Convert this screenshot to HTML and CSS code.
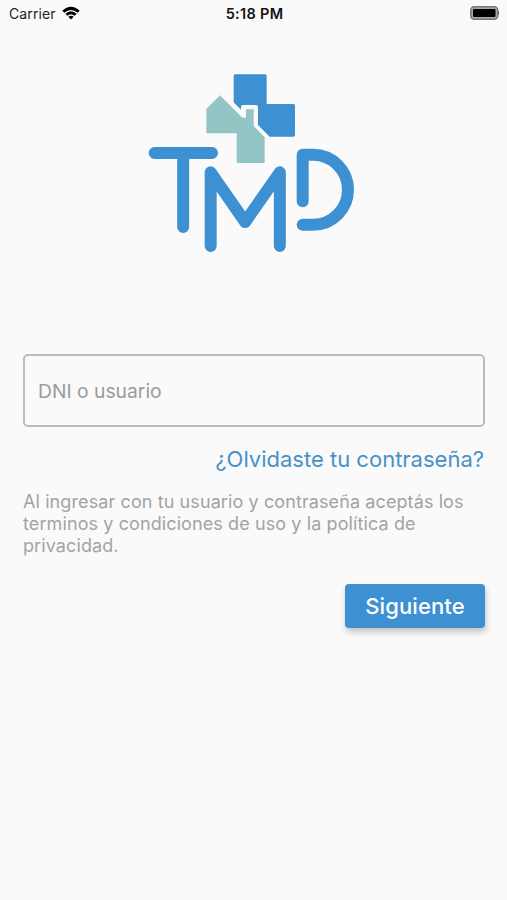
FILE: index.html
```html
<!DOCTYPE html>
<html lang="es">

<head>
    <meta charset="UTF-8">
    <meta name="viewport" content="width=device-width, initial-scale=1.0">
    <title>TMD - Ingresar</title>
    <link rel="stylesheet" href="styles.css">
</head>

<body>

    <header class="status-bar">
        <div class="carrier">
            <span class="carrier-name">Carrier</span>
            <svg class="wifi" viewBox="0 0 18 14" width="18" height="14">
                <path d="M0.300 4.700 Q9 -3 17.700 4.700 L15.700 6.800 Q9 1 2.300 6.800 Z" />
                <path d="M3.300 7.800 Q9 2.800 14.700 7.800 L12.700 9.800 Q9 6.600 5.300 9.800 Z" />
                <path d="M6.300 10.800 Q9 8.600 11.700 10.800 L9 13.600 Z" />
            </svg>
        </div>
        <span class="time">5:18 PM</span>
        <div class="power">
            <svg class="battery" viewBox="0 0 30 16" width="30" height="16">
                <rect class="battery-case" x="0.75" y="1.75" width="27" height="12.5" rx="3.5" />
                <rect x="3" y="4" width="22.5" height="8" rx="1" />
                <path d="M28.3 6 Q29.8 8 28.3 10 Z" />
            </svg>
        </div>
    </header>

    <main class="login">
        <svg class="logo" viewBox="0 0 675 585" width="225" height="195">
            <!-- Cross -->
            <path class="blue" d="M285 28 H375 Q380 28 380 33 V117 H460 Q465 117 465 122 V210 Q465 215 460 215 H389 L354 180 V126 Q354 120 348 120 H309 Q303 120 303 126 V134 L281 112 V33 Q281 28 285 28 Z" />
            <!-- House -->
            <path class="green" d="M240 91 L307 158 H318 V133 H341 V183 L374 217 V291 Q374 294 371 294 H293 Q290 294 290 291 V205 H202 Q199 205 199 202 V132 Z" />
            <!-- Letters -->
            <g class="letters">
                <path d="M44 264 H216 M129.5 264 V486" />
                <path d="M212 543 V322 L315.5 471 L419.5 322 V543" />
                <path d="M488 409 V269.5 H519 A105 105 0 0 1 519 479.5 H488" />
            </g>
        </svg>

        <form class="form">
            <label class="field">DNI o usuario</label>
            <a class="forgot">¿Olvidaste tu contraseña?</a>
            <p class="terms">Al ingresar con tu usuario y contraseña aceptás los<br>terminos y condiciones de uso y la política de<br>privacidad.</p>
            <button class="next" type="button">Siguiente</button>
        </form>
    </main>

</body>

</html>
```

FILE: styles.css
```css
* {
    margin: 0;
    padding: 0;
    box-sizing: border-box;
}

body {
    font-family: "Inter", sans-serif;
    background-color: #fafafa;
    min-height: 100vh;
}

/* Status bar */
.status-bar {
    display: flex;
    align-items: center;
    height: 26px;
    padding: 0 7px 0 9px;
    font-size: 14px;
    color: #222;
}

.carrier,
.power {
    flex: 1;
    display: flex;
    align-items: center;
}

.carrier {
    gap: 6px;
}

.carrier-name {
    letter-spacing: 0.1px;
}

.wifi {
    fill: #000;
}

.time {
    font-size: 14.5px;
    font-weight: 600;
    letter-spacing: 0.3px;
    color: #111;
}

.power {
    justify-content: flex-end;
}

.battery-case {
    fill: #aaa;
    stroke: #777;
    stroke-width: 1.5;
}

/* Login */
.login {
    padding: 39px 22px 0 23px;
}

.logo {
    display: block;
    margin-left: 117px;
}

.blue {
    fill: #3d90d2;
}

.green {
    fill: #93c5c4;
}

.letters {
    fill: none;
    stroke: #3d90d2;
    stroke-width: 36;
    stroke-linecap: round;
    stroke-linejoin: round;
}

.form {
    display: flex;
    flex-direction: column;
    margin-top: 94px;
}

.field {
    display: flex;
    align-items: center;
    height: 73px;
    padding-left: 13px;
    border: 2px solid #bcbcbc;
    border-radius: 5px;
    font-size: 19.3px;
    color: #9b9b9b;
}

.forgot {
    align-self: flex-end;
    margin-top: 18px;
    padding-right: 1px;
    font-size: 22px;
    line-height: 28px;
    color: #4592c9;
}

.terms {
    margin-top: 18px;
    font-size: 18px;
    line-height: 22px;
    letter-spacing: 0.1px;
    color: #a3a3a3;
    white-space: nowrap;
}

.next {
    align-self: flex-end;
    width: 140px;
    height: 44px;
    margin-top: 27px;
    border: none;
    border-radius: 4px;
    background-color: #3d90d2;
    box-shadow: 1px 4px 6px rgba(0, 0, 0, 0.22);
    font-family: inherit;
    font-size: 22px;
    font-weight: 500;
    letter-spacing: 0.1px;
    color: #fff;
}
```
